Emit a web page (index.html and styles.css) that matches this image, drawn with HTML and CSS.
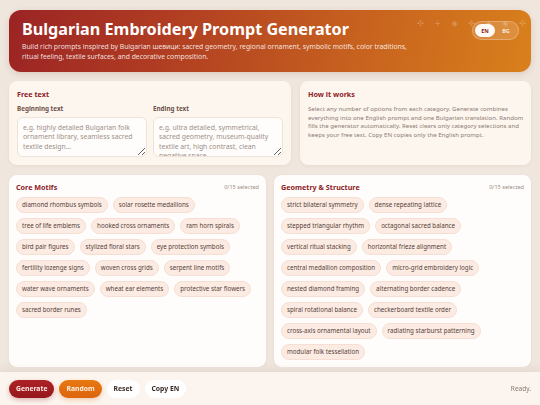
FILE: index.html
```html
<!DOCTYPE html>
<html lang="en">
<head>
<meta charset="utf-8">
<title>Bulgarian Embroidery Prompt Generator</title>
<link rel="stylesheet" href="styles.css">
</head>
<body>
<div class="page">
  <header class="hero">
    <div class="hero-text">
      <h1 class="hero-title">Bulgarian Embroidery Prompt Generator</h1>
      <p class="hero-sub">Build rich prompts inspired by Bulgarian шевици: sacred geometry, regional ornament, symbolic motifs, color traditions, ritual feeling, textile surfaces, and decorative composition.</p>
    </div>
    <div class="hero-deco" aria-hidden="true">
      <span class="deco">✣</span><span class="deco">+</span><span class="deco">◈</span><span class="deco">✣</span><span class="deco">+</span><span class="deco">◈</span><span class="deco">✣</span>
    </div>
    <div class="lang-toggle">
      <button class="lang-btn lang-active">EN</button>
      <button class="lang-btn">BG</button>
    </div>
  </header>

  <section class="top-row">
    <div class="card card-soft">
      <h2 class="card-title">Free text</h2>
      <div class="free-grid">
        <label class="field">
          <span class="field-label">Beginning text</span>
          <textarea class="field-input" placeholder="e.g. highly detailed Bulgarian folk ornament library, seamless sacred textile design..."></textarea>
        </label>
        <label class="field">
          <span class="field-label">Ending text</span>
          <textarea class="field-input" placeholder="e.g. ultra detailed, symmetrical, sacred geometry, museum-quality textile art, high contrast, clean negative space"></textarea>
        </label>
      </div>
    </div>
    <div class="card card-soft card-help">
      <h2 class="card-title">How it works</h2>
      <p class="help-text">Select any number of options from each category. Generate combines everything into one English prompt and one Bulgarian translation. Random fills the generator automatically. Reset clears only category selections and keeps your free text. Copy EN copies only the English prompt.</p>
    </div>
  </section>

  <section class="cat-row">
    <div class="card card-white">
      <div class="cat-head">
        <h2 class="card-title">Core Motifs</h2>
        <span class="cat-count">0/15 selected</span>
      </div>
      <div class="chips">
        <button class="chip">diamond rhombus symbols</button>
        <button class="chip">solar rosette medallions</button>
        <button class="chip">tree of life emblems</button>
        <button class="chip">hooked cross ornaments</button>
        <button class="chip">ram horn spirals</button>
        <button class="chip">bird pair figures</button>
        <button class="chip">stylized floral stars</button>
        <button class="chip">eye protection symbols</button>
        <button class="chip">fertility lozenge signs</button>
        <button class="chip">woven cross grids</button>
        <button class="chip">serpent line motifs</button>
        <button class="chip">water wave ornaments</button>
        <button class="chip">wheat ear elements</button>
        <button class="chip">protective star flowers</button>
        <button class="chip">sacred border runes</button>
      </div>
    </div>
    <div class="card card-white">
      <div class="cat-head">
        <h2 class="card-title">Geometry &amp; Structure</h2>
        <span class="cat-count">0/15 selected</span>
      </div>
      <div class="chips">
        <button class="chip">strict bilateral symmetry</button>
        <button class="chip">dense repeating lattice</button>
        <button class="chip">stepped triangular rhythm</button>
        <button class="chip">octagonal sacred balance</button>
        <button class="chip">vertical ritual stacking</button>
        <button class="chip">horizontal frieze alignment</button>
        <button class="chip">central medallion composition</button>
        <button class="chip">micro-grid embroidery logic</button>
        <button class="chip">nested diamond framing</button>
        <button class="chip">alternating border cadence</button>
        <button class="chip">spiral rotational balance</button>
        <button class="chip">checkerboard textile order</button>
        <button class="chip">cross-axis ornamental layout</button>
        <button class="chip">radiating starburst patterning</button>
        <button class="chip">modular folk tessellation</button>
      </div>
    </div>
  </section>
</div>

<footer class="action-bar">
  <div class="actions">
    <button class="btn btn-primary">Generate</button>
    <button class="btn btn-orange">Random</button>
    <button class="btn btn-plain">Reset</button>
    <button class="btn btn-plain">Copy EN</button>
  </div>
  <span class="status">Ready.</span>
</footer>
</body>
</html>
```

FILE: styles.css
```css
* { box-sizing: border-box; }

html, body {
  margin: 0;
  padding: 0;
}

body {
  background: #efe6de;
  font-family: "Noto Sans", "Open Sans", sans-serif;
  color: #3d2b25;
}

.page {
  padding: 10px 9px 0;
}

/* Header */
.hero {
  position: relative;
  display: flex;
  align-items: flex-start;
  justify-content: space-between;
  padding: 9px 12px 10px 13px;
  border-radius: 12px;
  background: linear-gradient(100deg, #9b2424 0%, #b03d22 30%, #c6601f 65%, #d9801c 100%);
  color: #fff;
  overflow: hidden;
  box-shadow: 0 2px 6px rgba(120, 50, 20, 0.15);
}

.hero-text {
  max-width: 395px;
}

.hero-title {
  margin: 0;
  font-size: 16.2px;
  line-height: 21px;
  font-weight: 700;
}

.hero-sub {
  margin: 2px 0 0;
  font-size: 6.8px;
  line-height: 10px;
  color: rgba(255, 255, 255, 0.86);
}

.hero-deco {
  position: absolute;
  top: 9px;
  left: 403px;
  display: flex;
}

.deco {
  width: 17px;
  text-align: center;
  font-family: "DejaVu Sans", sans-serif;
  font-size: 8px;
  line-height: 10px;
  color: rgba(255, 255, 255, 0.26);
}

.lang-toggle {
  position: relative;
  display: flex;
  align-items: center;
  gap: 1px;
  margin-top: 2px;
  padding: 2px;
  border-radius: 10px;
  background: rgba(255, 255, 255, 0.15);
  border: 1px solid rgba(255, 255, 255, 0.25);
}

.lang-btn {
  width: 20px;
  height: 13px;
  padding: 0;
  border: 0;
  border-radius: 7px;
  background: transparent;
  color: rgba(255, 255, 255, 0.85);
  font-family: inherit;
  font-size: 5.5px;
  font-weight: 700;
}

.lang-active {
  background: #fffaf5;
  color: #8a1f24;
}

/* Cards */
.card {
  border-radius: 8px;
  padding: 8px 8px 8px;
  box-shadow: 0 1px 3px rgba(110, 70, 40, 0.07);
}

.card-soft {
  background: #fdf6ef;
}

.card-help {
  padding-right: 5px;
}

.card-white {
  background: #fffdfb;
  padding: 7px 7px 7px;
}

.card-title {
  margin: 0;
  font-size: 7.2px;
  line-height: 10px;
  font-weight: 700;
  color: #8e2024;
}

.top-row {
  display: grid;
  grid-template-columns: 282px 1fr;
  gap: 9px;
  margin-top: 9px;
}

.free-grid {
  display: grid;
  grid-template-columns: 1fr 1fr;
  gap: 6px;
  margin-top: 5px;
}

.field {
  display: flex;
  flex-direction: column;
}

.field-label {
  font-size: 6.3px;
  line-height: 9px;
  font-weight: 700;
  color: #6e5249;
  margin-bottom: 4px;
}

.field-input {
  height: 40px;
  width: 100%;
  resize: vertical;
  padding: 5px 5px;
  border: 1px solid #efe2d8;
  border-radius: 6px;
  background: #fffdfb;
  font-family: inherit;
  font-size: 6.8px;
  line-height: 9.3px;
  color: #4a3a33;
  overflow: hidden;
}

.field-input::placeholder {
  color: #9c8f88;
}

.help-text {
  margin: 6px 0 0;
  font-size: 6.1px;
  line-height: 8.7px;
  color: #8c7b72;
}

.cat-row {
  display: grid;
  grid-template-columns: 1fr 1fr;
  gap: 8px;
  margin-top: 10px;
}

.cat-head {
  display: flex;
  align-items: center;
  justify-content: space-between;
}

.cat-count {
  font-size: 5.6px;
  color: #9b8c84;
}

.chips {
  display: flex;
  flex-wrap: wrap;
  gap: 5px;
  margin-top: 5px;
}

.chip {
  height: 16px;
  padding: 0 5px;
  border: 1px solid #f6dfd2;
  border-radius: 8px;
  background: #fcebe2;
  color: #553f3a;
  font-family: inherit;
  font-size: 6.2px;
  line-height: 14px;
  white-space: nowrap;
}

/* Action bar */
.action-bar {
  position: fixed;
  left: 0;
  right: 0;
  bottom: 0;
  height: 33px;
  display: flex;
  align-items: center;
  justify-content: space-between;
  padding: 0 9px;
  background: #fcf5ef;
  box-shadow: 0 -3px 8px rgba(120, 80, 50, 0.08);
}

.actions {
  display: flex;
  gap: 5px;
}

.btn {
  height: 18px;
  padding: 0 7px;
  border: 0;
  border-radius: 9px;
  font-family: inherit;
  font-size: 6.8px;
  font-weight: 700;
}

.btn-primary {
  background: linear-gradient(180deg, #ad2126, #95171d);
  color: #fde8e4;
  box-shadow: 0 2px 5px rgba(150, 30, 30, 0.3);
}

.btn-orange {
  background: linear-gradient(180deg, #e7790f, #dc640e);
  color: #fff1e2;
  box-shadow: 0 2px 5px rgba(220, 110, 20, 0.3);
}

.btn-plain {
  background: #ffffff;
  color: #3a2a25;
}

.status {
  font-size: 6.5px;
  color: #8a7b72;
}
```
